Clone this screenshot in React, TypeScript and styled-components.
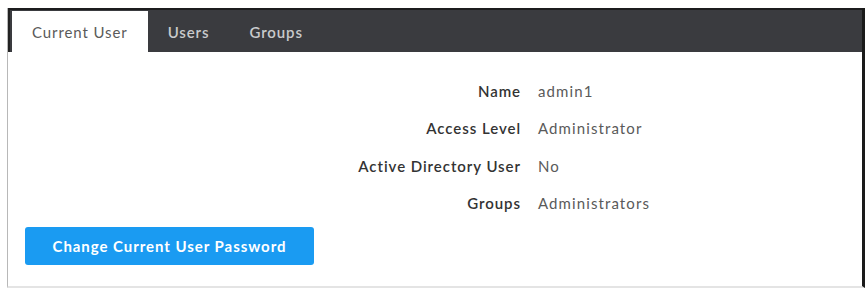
import React from "react";
import styled, { createGlobalStyle } from "styled-components";

const Global = createGlobalStyle`
  html, body { margin: 0; padding: 0; background: #ffffff; }
  body { font-family: Lato, "Open Sans", "Liberation Sans", sans-serif; }
`;

const Page = styled.div`
  width: 868px;
  height: 292px;
  padding: 8px 3px 4px 7px;
  box-sizing: border-box;
  background: #fff;
`;

const Frame = styled.div`
  height: 280px;
  box-sizing: border-box;
  border-left: 1px solid #b8b8b8;
  border-right: 3px solid #1a1a1a;
  border-bottom: 2px solid #e4e4e4;
  display: flex;
  flex-direction: column;
`;

const TabBar = styled.div`
  height: 44px;
  box-sizing: border-box;
  background: #3a3b3f;
  border-top: 2px solid #1c1c1e;
  border-left: 2px solid #222;
  display: flex;
  align-items: flex-end;
  padding-left: 2px;
`;

const Tab = styled.div<{ $active?: boolean }>`
  height: 41px;
  box-sizing: border-box;
  padding: 0 20px;
  display: flex;
  align-items: center;
  font-size: 15px;
  letter-spacing: 0.9px;
  color: ${(p) => (p.$active ? "#5a5a5a" : "#c9cacc")};
  background: ${(p) => (p.$active ? "#ffffff" : "transparent")};
  font-weight: ${(p) => (p.$active ? 400 : 600)};
`;

const Content = styled.div`
  flex: 1;
  padding: 20px 0 0 17px;
  display: flex;
  flex-direction: column;
`;

const Details = styled.div`
  display: grid;
  grid-template-columns: 496px 1fr;
  column-gap: 17px;
  grid-auto-rows: 37.5px;
  align-items: center;
`;

const Label = styled.div`
  text-align: right;
  font-size: 15px;
  letter-spacing: 0.95px;
  font-weight: 600;
  color: #333;
`;

const Value = styled.div`
  font-size: 15px;
  letter-spacing: 1.1px;
  color: #5a5a5a;
`;

const Button = styled.button`
  align-self: flex-start;
  margin-top: 5px;
  width: 289px;
  height: 38px;
  border: none;
  border-radius: 3px;
  background: #1a9bf2;
  color: #fff;
  font-family: Lato, "Open Sans", "Liberation Sans", sans-serif;
  font-size: 15px;
  letter-spacing: 0.95px;
  font-weight: 700;
  cursor: pointer;
`;

const rows: [string, string][] = [
  ["Name", "admin1"],
  ["Access Level", "Administrator"],
  ["Active Directory User", "No"],
  ["Groups", "Administrators"],
];

export default function App() {
  return (
    <Page>
      <Global />
      <Frame>
        <TabBar>
          <Tab $active>Current User</Tab>
          <Tab>Users</Tab>
          <Tab>Groups</Tab>
        </TabBar>
        <Content>
          <Details>
            {rows.map(([k, v]) => (
              <React.Fragment key={k}>
                <Label>{k}</Label>
                <Value>{v}</Value>
              </React.Fragment>
            ))}
          </Details>
          <Button>Change Current User Password</Button>
        </Content>
      </Frame>
    </Page>
  );
}
